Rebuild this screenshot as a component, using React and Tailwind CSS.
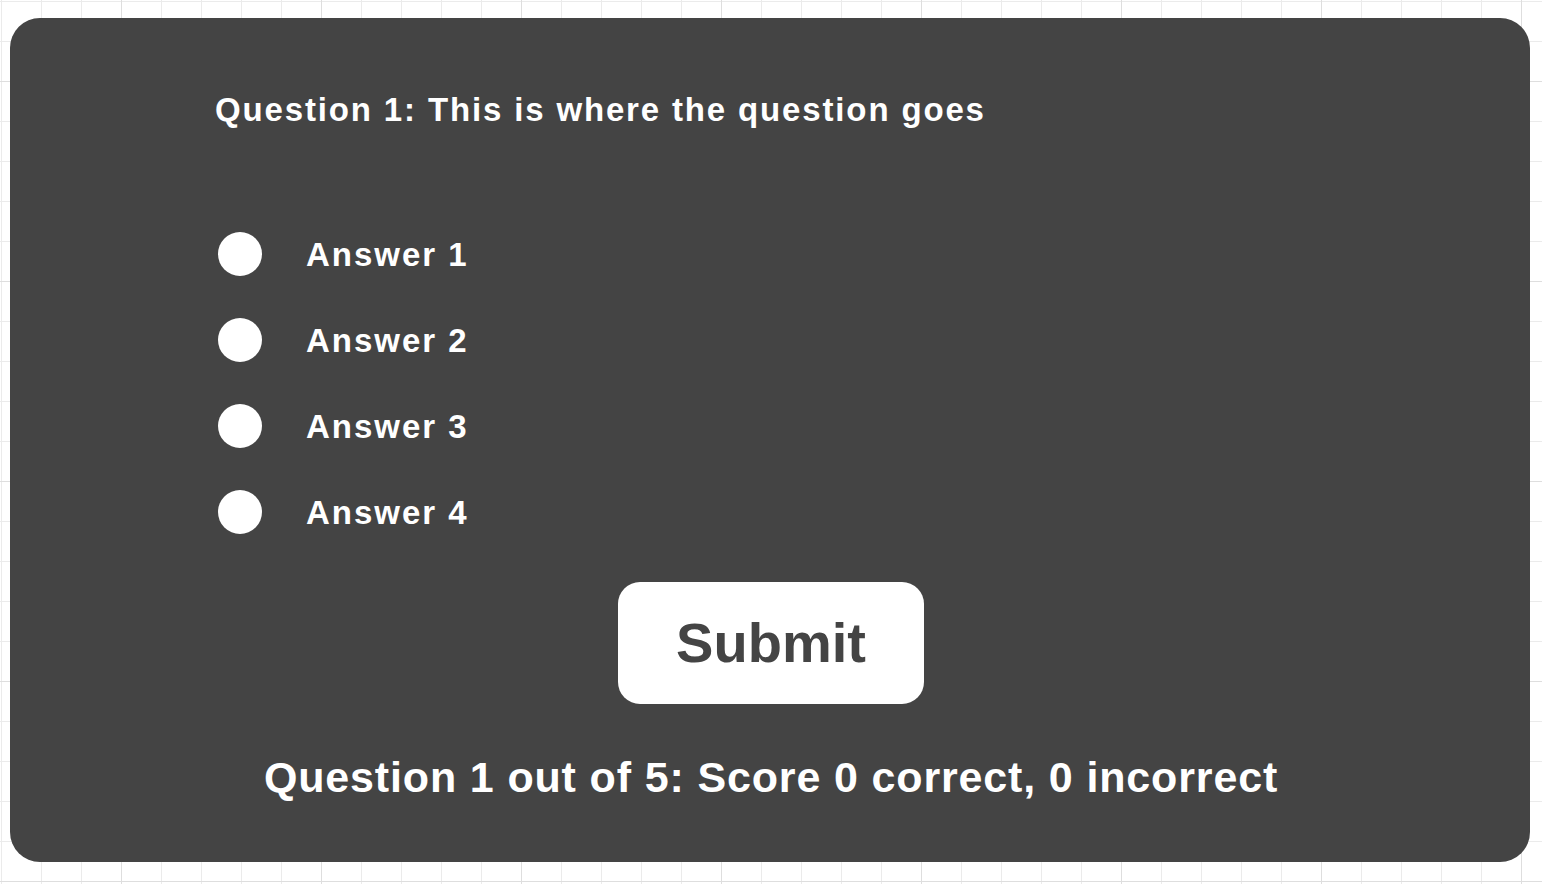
import React from "react";

const answers = ["Answer 1", "Answer 2", "Answer 3", "Answer 4"];

export default function App() {
  return (
    <div className="min-h-screen w-full bg-white pt-[18px] pl-[10px] bg-[linear-gradient(to_right,#dedede_1px,transparent_1px),linear-gradient(to_bottom,#dedede_1px,transparent_1px),linear-gradient(to_right,#ebebeb_1px,transparent_1px),linear-gradient(to_bottom,#ebebeb_1px,transparent_1px)] bg-size-[200px_200px,200px_200px,40px_40px,40px_40px] bg-position-[121px_0,0_81px,1px_1px,1px_1px] font-['Liberation_Sans',Arial,sans-serif]">
      <div className="w-[1520px] h-[844px] rounded-[30px] bg-[#444444] flex flex-col">
        {/* Question */}
        <h1 className="mt-[75px] pl-[205px] text-[33px] leading-none font-bold tracking-[1.85px] text-white">
          Question 1: This is where the question goes
        </h1>

        {/* Answers */}
        <div className="mt-[106px] pl-[208px] flex flex-col gap-[42px]">
          {answers.map((a) => (
            <label key={a} className="flex items-center gap-[44px] h-[44px] cursor-pointer">
              <span className="w-[44px] h-[44px] rounded-full bg-white shrink-0" />
              <span className="text-[33px] leading-none font-bold tracking-[2px] text-white">{a}</span>
            </label>
          ))}
        </div>

        {/* Submit */}
        <div className="mt-[48px] pl-[2px] flex justify-center">
          <button className="w-[306px] h-[122px] rounded-[22px] bg-white text-[#444444] text-[56px] leading-none font-bold flex items-center justify-center">
            Submit
          </button>
        </div>

        {/* Score */}
        <p className="mt-[52px] pl-[2px] text-center text-[43px] leading-none font-bold tracking-[0.85px] text-white">
          Question 1 out of 5: Score 0 correct, 0 incorrect
        </p>
      </div>
    </div>
  );
}
